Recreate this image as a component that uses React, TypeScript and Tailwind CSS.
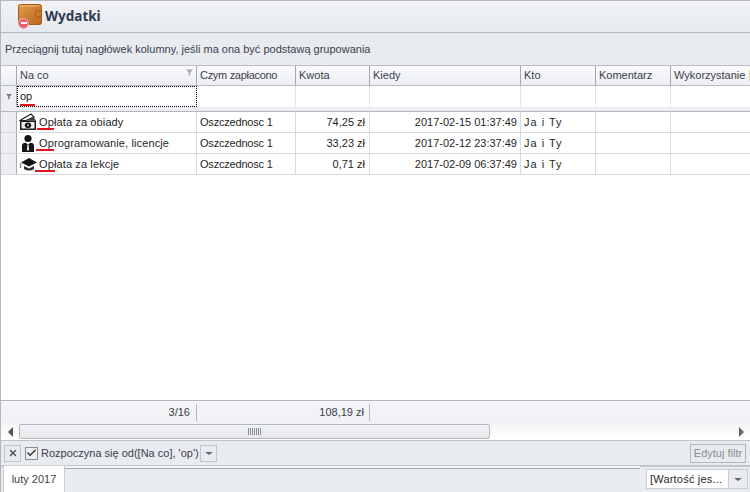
import React from 'react';
import { Check, X } from 'lucide-react';

const cols = 'grid grid-cols-[16px_180px_99px_74px_151px_75px_75px_80px]';

const headers = ['Na co', 'Czym zapłacono', 'Kwota', 'Kiedy', 'Kto', 'Komentarz', 'Wykorzystanie'];

const FunnelIcon: React.FC<{ className?: string; fill?: string }> = ({ className, fill = '#a9adb3' }) => (
  <svg viewBox="0 0 8 8" className={className}>
    <path d="M0 0.5h8L5 4v3.5H3V4z" fill={fill} />
  </svg>
);

const MoneyIcon = () => (
  <svg viewBox="0 0 18 18" className="w-[18px] h-[18px]">
    <path d="M1 7.5 L12 1 L15 4 L7 7.5z" fill="#fff" stroke="#1c1c1c" strokeWidth="1.2" />
    <path d="M8 7.5 L14 3.5 L17 7.5z" fill="#444" />
    <rect x="1" y="7.5" width="16" height="9.5" fill="#1c1c1c" />
    <rect x="2.5" y="9" width="13" height="6.5" fill="#ececec" />
    <ellipse cx="9" cy="12.2" rx="3.2" ry="2.8" fill="#1c1c1c" />
    <circle cx="9" cy="12.2" r="1" fill="#bbb" />
  </svg>
);

const UserIcon = () => (
  <svg viewBox="0 0 18 18" className="w-[18px] h-[18px]">
    <circle cx="9" cy="4.5" r="3.6" fill="#151515" />
    <path d="M3 18 V12 Q3 8.8 6.5 8.8 L9 10.5 L11.5 8.8 Q15 8.8 15 12 V18z" fill="#151515" />
    <path d="M8.4 10.6h1.2l.5 5-1.1 1.4-1.1-1.4z" fill="#e8e8e8" />
  </svg>
);

const CapIcon = () => (
  <svg viewBox="0 0 18 18" className="w-[18px] h-[18px]">
    <path d="M10 3 L18 7.5 L10 11.5 L2 7.5z" fill="#151515" />
    <path d="M5 11 L10 13.5 L15 11 V14 Q10 17 5 14z" fill="#2b2b2b" />
    <path d="M1.5 8v5" stroke="#8a8a8a" strokeWidth="1.4" />
  </svg>
);

const WalletIcon = () => (
  <div className="relative w-[24px] h-[26px] shrink-0">
    <svg viewBox="0 0 24 26" className="w-[24px] h-[26px]">
      <defs>
        <linearGradient id="wallet" x1="0" y1="0" x2="1" y2="1">
          <stop offset="0" stopColor="#e39a48" />
          <stop offset="1" stopColor="#b9661d" />
        </linearGradient>
      </defs>
      <rect x="0.5" y="0.5" width="23" height="20" rx="2" fill="url(#wallet)" stroke="#a65c1c" />
      <path d="M2 2h19" stroke="#f0b979" strokeWidth="1" />
      <rect x="17.5" y="7" width="6" height="6" rx="1" fill="#c97a2c" stroke="#a65c1c" />
    </svg>
    <div className="absolute left-[0px] top-[14px] w-[11px] h-[11px] rounded-full bg-[#e2636b] border border-[#f3b3b5] flex items-center justify-center">
      <div className="w-[6px] h-[2px] bg-white" />
    </div>
  </div>
);

const Marked: React.FC<{ text: string; underline: string }> = ({ text, underline }) => (
  <span className="relative whitespace-nowrap">
    {text}
    <span className={`absolute top-[14px] h-[2px] bg-[#e2141c] ${underline}`} />
  </span>
);

const rows = [
  { icon: <MoneyIcon />, text: 'Opłata za obiady', underline: 'left-[-2px] w-[17px]', amount: '74,25 zł', date: '2017-02-15 01:37:49' },
  { icon: <UserIcon />, text: 'Oprogramowanie, licencje', underline: 'left-[-3px] w-[18px]', amount: '33,23 zł', date: '2017-02-12 23:37:49' },
  { icon: <CapIcon />, text: 'Opłata za lekcje', underline: 'left-[-4px] w-[20px]', amount: '0,71 zł', date: '2017-02-09 06:37:49' },
];

const App: React.FC = () => {
  return (
    <div className="w-[750px] h-[492px] overflow-hidden flex flex-col bg-[#e8ebf0] border-l border-[#b4b7bd] text-[11px] text-[#3b3f4b] font-['Liberation_Sans','Noto_Sans',sans-serif]">
      {/* title */}
      <div className="h-[33px] shrink-0 flex items-center pl-[17px] gap-[3px] border-t border-b border-[#b4b7bd] bg-gradient-to-b from-[#f0f2f5] to-[#e6e9ee]">
        <WalletIcon />
        <span className="text-[13.5px] font-bold text-[#2f3a4f] font-['Noto_Sans',sans-serif]">Wydatki</span>
      </div>

      {/* group panel */}
      <div className="h-[32px] shrink-0 flex items-center pl-[4px] pt-[1px] text-[#3b3f4b]">
        Przeciągnij tutaj nagłówek kolumny, jeśli ma ona być podstawą grupowania
      </div>

      {/* headers */}
      <div className={`${cols} h-[21px] shrink-0 bg-gradient-to-b from-[#fbfbfc] to-[#eceef2] border-t border-b border-[#b8bcc4]`}>
        <div className="border-r border-[#a0a7b5]" />
        {headers.map((h, i) => (
          <div key={h} className={`relative flex items-center pl-[3px] border-r border-[#a0a7b5] last:border-r-0 whitespace-nowrap overflow-hidden ${i === 1 ? 'tracking-[-0.3px]' : ''}`}>
            {h}
            {i === 0 && <FunnelIcon className="absolute right-[3px] top-[3px] w-[7px] h-[7px]" />}
            {i === 6 && <div className="absolute right-[1px] top-[4px] w-[1px] h-[11px] bg-[#f2d9a0]" />}
          </div>
        ))}
      </div>

      {/* auto filter */}
      <div className={`${cols} h-[21px] shrink-0 bg-white`}>
        <div className="flex items-center justify-center bg-[#eceef2] border-r border-[#a7abb5]">
          <FunnelIcon className="w-[6px] h-[7px]" fill="#777b82" />
        </div>
        <div className="border border-dotted border-black pl-[2px] leading-[18px] text-[#1a1a1a]">
          <Marked text="op" underline="left-[0px] w-[15px]" />
        </div>
        {[0, 1, 2, 3, 4, 5].map((i) => (
          <div key={i} className="border-r border-[#e1e3e7]" />
        ))}
      </div>

      <div className="h-[5px] shrink-0 bg-[#eceef2] border-b border-[#b4b7bd]" />

      {/* rows */}
      <div className="flex-1 bg-white">
        {rows.map((r) => (
          <div key={r.date} className={`${cols} h-[21px] border-b border-[#d7d9dd] text-[#1f1f1f]`}>
            <div className="bg-[#eceef2] border-r border-[#a7abb5]" />
            <div className="flex items-center gap-[2px] pl-[2px] border-r border-[#d7d9dd] tracking-[0.12px]">
              {r.icon}
              <Marked text={r.text} underline={r.underline} />
            </div>
            <div className="flex items-center pl-[3px] border-r border-[#d7d9dd] tracking-[-0.2px]">Oszczednosc 1</div>
            <div className="flex items-center justify-end pr-[4px] border-r border-[#d7d9dd]">{r.amount}</div>
            <div className="flex items-center justify-end pr-[3px] border-r border-[#d7d9dd]">{r.date}</div>
            <div className="flex items-center pl-[3px] border-r border-[#d7d9dd] tracking-[1px]">Ja i Ty</div>
            <div className="border-r border-[#d7d9dd]" />
            <div />
          </div>
        ))}
      </div>

      {/* footer */}
      <div className={`${cols} h-[24px] shrink-0 bg-gradient-to-b from-[#f5f6f8] to-[#eef0f3] border-t border-[#b4b7bd]`}>
        <div />
        <div className="flex items-center justify-end pr-[6px] my-[3px] border-r border-[#b4b7bd]">3/16</div>
        <div />
        <div className="flex items-center justify-end pr-[5px] my-[3px] border-r border-[#b4b7bd] whitespace-nowrap">108,19 zł</div>
      </div>

      {/* scrollbar */}
      <div className="h-[17px] shrink-0 flex items-center bg-gradient-to-b from-[#f4f5f7] to-white border-b border-[#c2c5cc]">
        <div className="w-[18px] flex justify-center shrink-0">
          <div className="border-y-[5px] border-y-transparent border-r-[5px] border-r-[#555]" />
        </div>
        <div className="w-[471px] h-[15px] shrink-0 -mt-[1px] rounded-[2px] border border-[#b4b7bd] bg-gradient-to-b from-[#f2f3f4] to-[#e6e7e9] flex items-center justify-center gap-[1px]">
          {[0, 1, 2, 3, 4, 5, 6].map((i) => (
            <div key={i} className="w-[1px] h-[7px] bg-[#8a8d93]" />
          ))}
        </div>
        <div className="flex-1" />
        <div className="w-[17px] flex justify-center shrink-0">
          <div className="border-y-[5px] border-y-transparent border-l-[5px] border-l-[#666]" />
        </div>
      </div>

      {/* filter bar */}
      <div className="h-[26px] shrink-0 flex items-center pl-[3px] pr-[4px] border-b-2 border-[#c2c5cc]">
        <button className="w-[17px] h-[17px] border border-[#c2c5cc] flex items-center justify-center text-[#555]">
          <X size={10} strokeWidth={3.5} />
        </button>
        <div className="ml-[4px] w-[13px] h-[13px] border border-[#8a8d93] bg-[#eceef2] flex items-center justify-center text-[#333]">
          <Check size={12} strokeWidth={3} />
        </div>
        <span className="ml-[3px] w-[159px] whitespace-nowrap">Rozpoczyna się od([Na co], 'op')</span>
        <button className="w-[17px] h-[17px] border border-[#c2c5cc] flex items-center justify-center">
          <div className="border-x-[4px] border-x-transparent border-t-[3px] border-t-[#666]" />
        </button>
        <button className="ml-auto w-[56px] h-[19px] border border-[#b4b7bd] text-[#8a8d93] whitespace-nowrap">Edytuj filtr</button>
      </div>

      {/* status bar */}
      <div className="h-[27px] shrink-0 flex items-start pl-[2px] pr-[1px] -mt-[2px]">
        <div className="w-[62px] h-[27px] bg-white border-x border-t border-[#c9ccd2] flex items-center justify-center">luty 2017</div>
        <div className="w-[575px] h-[3px] mt-[1px] bg-[#f5f6f8] border-b border-[#a7abb5]" />
        <div className="ml-[6px] mt-[4px] flex h-[20px]">
          <div className="w-[83px] bg-white border border-[#c9ccd2] pl-[3px] leading-[18px] whitespace-nowrap text-[#1f1f1f] tracking-[0.2px]">[Wartość jes...</div>
          <div className="w-[19px] border-y border-r border-[#c9ccd2] flex items-center justify-center">
            <div className="border-x-[4px] border-x-transparent border-t-[3px] border-t-[#666]" />
          </div>
        </div>
      </div>
    </div>
  );
};

export default App;
